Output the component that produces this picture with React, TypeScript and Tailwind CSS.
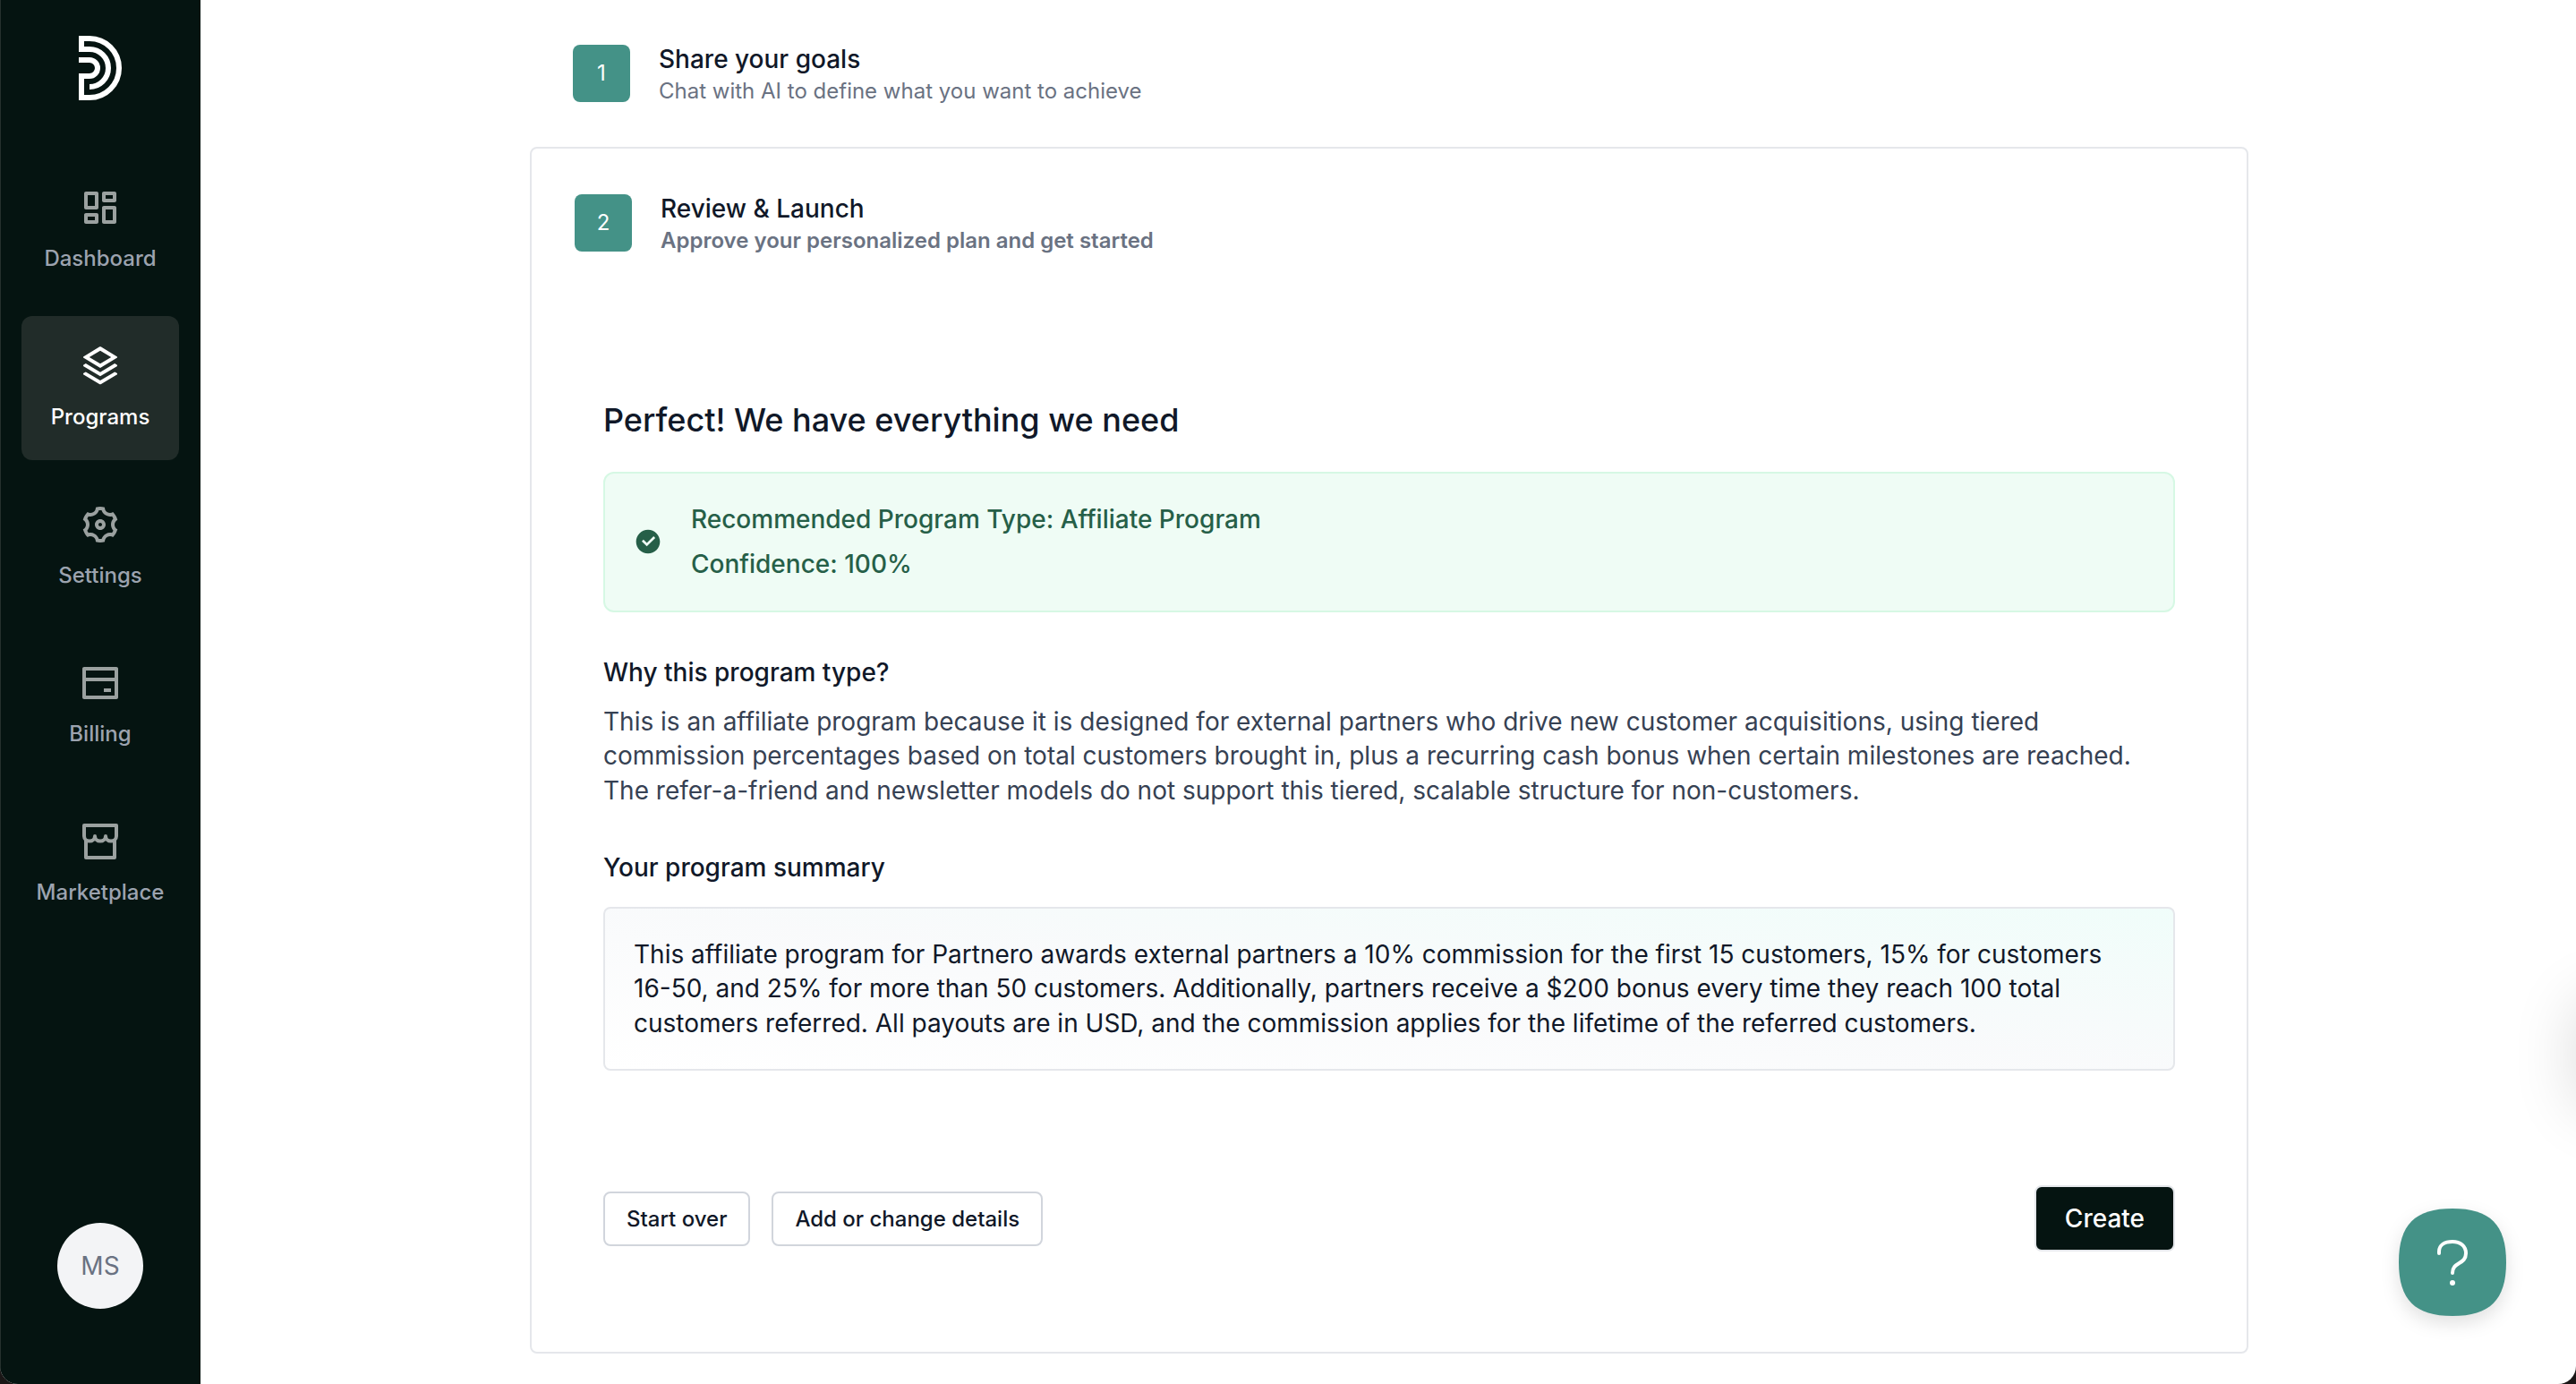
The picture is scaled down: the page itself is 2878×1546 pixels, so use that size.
import React from "react";
import {
  RiBankCardLine,
  RiCheckboxCircleFill,
  RiDashboardLine,
  RiSettings3Line,
  RiStackLine,
} from "react-icons/ri";

type IconProps = { className?: string };
type NavEntry = { label: string; icon: React.ComponentType<IconProps>; active?: boolean };

function StoreIcon({ className }: IconProps) {
  return (
    <svg
      className={className}
      viewBox="0 0 24 24"
      fill="none"
      stroke="currentColor"
      strokeWidth="2"
      strokeLinejoin="round"
      aria-hidden="true"
    >
      <path d="M3 3h18v6a3 2.8 0 0 1-6 0 3 2.8 0 0 1-6 0 3 2.8 0 0 1-6 0V3Z" />
      <path d="M4 11.5V21h16v-9.5" />
    </svg>
  );
}

const navEntries: NavEntry[] = [
  { label: "Dashboard", icon: RiDashboardLine },
  { label: "Programs", icon: RiStackLine, active: true },
  { label: "Settings", icon: RiSettings3Line },
  { label: "Billing", icon: RiBankCardLine },
  { label: "Marketplace", icon: StoreIcon },
];

function Logo() {
  return (
    <svg width="48" height="72" viewBox="0 0 48 72" fill="none" aria-hidden="true">
      <path
        d="M12 57a21 21 0 0 0 0-42H3V3h9a33 33 0 0 1 0 66H3V45h9a9 9 0 0 0 0-18H0"
        stroke="#fff"
        strokeWidth="6"
      />
    </svg>
  );
}

function Sidebar() {
  return (
    <aside className="flex w-56 shrink-0 flex-col items-center border-x border-l-[#26302e] border-r-[#051411] bg-[#051411] pt-10 pb-[84px]">
      <a href="#home" aria-label="Home">
        <Logo />
      </a>
      <nav className="mt-16 flex w-full flex-col gap-4 px-[23px]">
        {navEntries.map(({ label, icon: Icon, active }) => (
          <a
            key={label}
            href={"#" + label.toLowerCase()}
            aria-current={active ? "page" : undefined}
            className={
              active
                ? "flex flex-col items-center gap-4 rounded-xl bg-[#212c29] py-8 text-white"
                : "flex flex-col items-center gap-4 rounded-xl py-8 text-[#9ca3af]"
            }
          >
            <Icon className={active ? "size-12" : "size-12 text-[#9ba1a0]"} />
            <span className="text-2xl leading-[33px] font-medium">{label}</span>
          </a>
        ))}
      </nav>
      <button
        type="button"
        aria-label="Account MS"
        className="mt-auto size-24 rounded-full bg-gray-100 text-[28px] text-gray-500"
      >
        MS
      </button>
    </aside>
  );
}

function Step({
  number,
  title,
  text,
  current,
}: {
  number: number;
  title: string;
  text: string;
  current?: boolean;
}) {
  return (
    <div className="flex items-center gap-8">
      <span className="flex size-16 items-center justify-center rounded-lg bg-[#449287] text-2xl text-white">
        {number}
      </span>
      <div className="pt-1">
        <h2 className="text-[28px] leading-[35px] font-medium text-gray-900">{title}</h2>
        <p
          className={
            current
              ? "text-2xl leading-[35px] font-semibold text-gray-500"
              : "text-2xl leading-[35px] text-gray-500"
          }
        >
          {text}
        </p>
      </div>
    </div>
  );
}

function ReviewCard() {
  return (
    <section className="rounded-lg border-2 border-gray-200">
      <div className="px-12 py-[46px]">
        <Step
          number={2}
          title="Review & Launch"
          text="Approve your personalized plan and get started"
          current
        />
      </div>
      <div className="px-20 pt-[115px] pb-28">
        <h1 className="text-4xl leading-[44px] font-medium text-gray-900">
          Perfect! We have everything we need
        </h1>
        <div className="mt-9 flex items-center gap-8 rounded-xl border-2 border-[#d6f8e4] bg-[#effcf5] px-8 pt-[26px] pb-[27px] text-[28px] leading-[50px] font-medium text-[#265f48]">
          <RiCheckboxCircleFill className="size-8" />
          <div>
            <p>Recommended Program Type: Affiliate Program</p>
            <p>Confidence: 100%</p>
          </div>
        </div>
        <h3 className="mt-12 text-[28px] leading-snug font-medium text-gray-900">
          Why this program type?
        </h3>
        <p className="mt-4 text-[28px] leading-snug text-gray-700">
          This is an affiliate program because it is designed for external partners who drive new
          customer acquisitions, using tiered commission percentages based on total customers
          brought in, plus a recurring cash bonus when certain milestones are reached. The
          refer-a-friend and newsletter models do not support this tiered, scalable structure for
          non-customers.
        </p>
        <h3 className="mt-12 text-[28px] leading-snug font-medium text-gray-900">
          Your program summary
        </h3>
        <p className="mt-6 rounded-lg border-2 border-gray-200 bg-linear-to-tr from-white via-gray-50 to-teal-50 p-8 text-[28px] leading-snug text-gray-900">
          This affiliate program for Partnero awards external partners a 10% commission for the
          first 15 customers, 15% for customers 16-50, and 25% for more than 50 customers.
          Additionally, partners receive a $200 bonus every time they reach 100 total customers
          referred. All payouts are in USD, and the commission applies for the lifetime of the
          referred customers.
        </p>
        <div className="mt-32 flex items-center gap-6">
          <button
            type="button"
            className="rounded-lg border-2 border-gray-300 bg-white px-6 py-3 text-2xl leading-[33px] font-medium text-gray-900"
          >
            Start over
          </button>
          <button
            type="button"
            className="rounded-lg border-2 border-gray-300 bg-white px-6 py-3 text-2xl leading-[33px] font-medium text-gray-900"
          >
            Add or change details
          </button>
          <button
            type="button"
            className="ml-auto rounded-lg border-2 border-gray-200 bg-[#051411] px-8 py-4 text-[28px] leading-[38px] font-medium text-white"
          >
            Create
          </button>
        </div>
      </div>
    </section>
  );
}

function HelpButton() {
  return (
    <button
      type="button"
      aria-label="Help"
      className="fixed right-[78px] bottom-[76px] size-[120px] drop-shadow-[0_8px_10px_rgba(0,0,0,0.12)]"
    >
      <svg width="120" height="120" viewBox="0 0 120 120" fill="none" aria-hidden="true">
        <path
          d="M60 0C102 0 120 18 120 60S102 120 60 120 0 102 0 60 18 0 60 0Z"
          fill="#449287"
        />
        <path
          d="M45 50v-2c0-7 6-11 15-11s15 5 15 13c0 13-15 9-15 22"
          stroke="#fff"
          strokeWidth="4"
          strokeLinecap="round"
        />
        <circle cx="60" cy="83" r="3" fill="#fff" />
      </svg>
    </button>
  );
}

export default function App() {
  return (
    <div className="bg-[#1a1616]" style={{ fontFamily: 'Inter, "Liberation Sans", sans-serif' }}>
      <div className="flex min-h-screen overflow-hidden rounded-b-[20px] bg-white">
        <Sidebar />
        <main className="flex-1 pl-[2px]">
          <div className="mx-auto max-w-[1920px]">
            <div className="px-12 py-[45px]">
              <Step
                number={1}
                title="Share your goals"
                text="Chat with AI to define what you want to achieve"
              />
            </div>
            <ReviewCard />
          </div>
        </main>
      </div>
      <div className="fixed top-[1118px] -right-24 h-[120px] w-24 rounded-l-2xl bg-white shadow-[0_0_72px_rgba(0,0,0,0.14)]" />
      <HelpButton />
    </div>
  );
}
